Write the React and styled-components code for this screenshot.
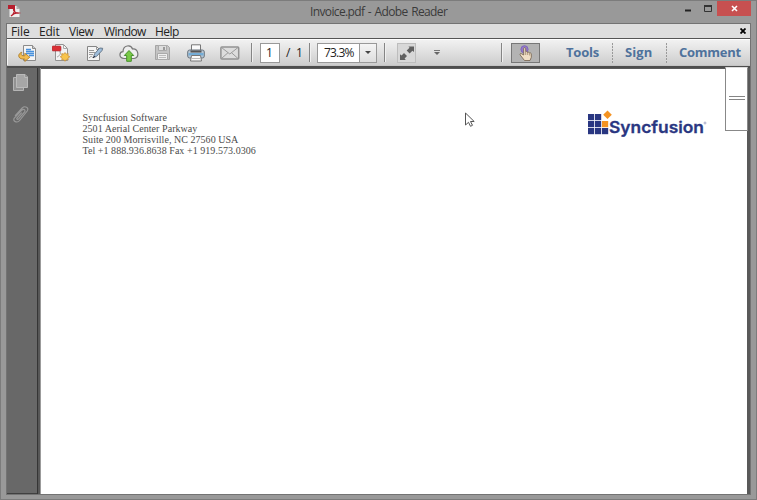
import React from "react";
import styled, { createGlobalStyle } from "styled-components";

const Global = createGlobalStyle`
  * { box-sizing: border-box; }
  body { margin: 0; overflow: hidden; }
`;
const Window = styled.div`
  width: 757px; height: 500px; padding: 0 5px 5px; background: #999;
  border: 1px solid #7c7c7c; display: flex; flex-direction: column;
  font-family: "Open Sans", "Noto Sans", sans-serif; color: #222;
`;
const TitleBar = styled.header`
  height: 22px; display: grid; grid-template-columns: 304px 160px 1fr; flex: none;
`;
const AppIcon = styled.div`padding: 3px 0 0 1px; line-height: 0;`;
const Title = styled.div`
  font-size: 12px; line-height: 22px; white-space: nowrap; color: #3b3b3b;
  letter-spacing: ${(p) => p.$track}px; word-spacing: 1px;
`;
const Controls = styled.div`display: flex; justify-content: flex-end;`;
const CloseButton = styled.div`
  width: 34px; height: 15px; background: #c75050; display: flex; justify-content: center; align-items: center;
`;
const Frame = styled.main`
  width: 745px; height: 472px; border: 1px solid #737373; display: flex; flex-direction: column;
  background: #595959; flex: none;
`;
const MenuBar = styled.nav`
  height: 14px; background: #dedede; display: flex; flex: none; padding-left: 4px;
`;
const MenuItem = styled.span`
  width: ${(p) => p.$w}px; font-size: 12px; line-height: 15px; letter-spacing: ${(p) => p.$track}px;
  white-space: nowrap; flex: none;
`;
const CloseDocument = styled.div`margin-left: auto; padding: 4px 4px 0 0; line-height: 0;`;
const Toolbar = styled.div`
  height: 28px; flex: none; display: flex; align-items: center; padding-top: 1px;
  border-top: 1px solid #555; border-bottom: 1px solid #c4c4c4;
  background: linear-gradient(#f3f3f3, #e2e2e2 45%, #cdcdcd); box-shadow: inset 0 1px #fff, inset 1px 0 #f5f5f5;
`;
const IconSlot = styled.div`
  width: ${(p) => p.$w}px; padding-left: ${(p) => p.$pad || 0}px; flex: none; display: flex; align-items: center;
`;
const Separator = styled.div`
  width: 1px; height: 19px; margin-right: ${(p) => p.$after}px; flex: none; background: #858585;
  box-shadow: 1px 0 #f0f0f0;
`;
const Field = styled.div`
  width: ${(p) => p.$w}px; height: 20px; margin-right: ${(p) => p.$after || 0}px; border: 1px solid #999;
  background: #fff; flex: none; display: flex; align-items: center; font-size: 12px; line-height: 18px;
  letter-spacing: ${(p) => p.$track || 0}px;
`;
const PageNumber = styled.span`flex: 1; text-align: center; padding-right: 1px;`;
const PageCount = styled.span`
  width: 29px; padding-left: 6px; font-size: 12px; white-space: pre; flex: none; line-height: 18px;
  letter-spacing: -0.2px;
`;
const ZoomValue = styled.span`width: 42px; padding-left: 6px;`;
const Arrow = styled.span`
  height: 18px; width: 17px; border-left: 1px solid #999; background: linear-gradient(#f5f5f5, #ddd);
  display: flex; align-items: center; justify-content: center;
`;
const Tool = styled.div`
  width: ${(p) => p.$w}px; height: 20px; border: 1px solid ${(p) => (p.$active ? "#777" : "#bdbdbd")};
  background: ${(p) => (p.$active ? "#b3b3b3" : "#d8d8d8")}; margin-right: ${(p) => p.$after}px; flex: none;
  display: flex; align-items: center; justify-content: center;
`;
const PanelLink = styled.div`
  width: ${(p) => p.$w}px; color: #4f729c; font-size: 13px; font-weight: 700; white-space: nowrap;
  line-height: 19px; letter-spacing: ${(p) => p.$track}px; flex: none;
`;
const Dots = styled.div`
  width: 1px; height: 20px; flex: none; margin-right: 12px;
  background: repeating-linear-gradient(#999 0 2px, #ddd 2px 3px);
`;
const Workspace = styled.div`
  flex: 1; display: flex; min-height: 0; border-top: 2px solid #4d4d4d; position: relative;
`;
const Sidebar = styled.aside`
  width: 30px; background: #686868; border-bottom: 1px solid #404040; padding: 5px 0 0 5px;
  display: flex; flex-direction: column; gap: 13px; line-height: 0;
`;
const Gutter = styled.div`
  width: 4px; border-left: 1px solid #353535; border-right: 1px solid #9b9b9b; background: #575757;
`;
const Page = styled.article`
  width: 706px; margin-top: 1px; background: #fff; display: flex; justify-content: space-between;
  padding: 43px 40px 0 41.5px; position: relative;
`;
const Address = styled.address`
  font: normal 10px/11.1px "Liberation Serif", serif; color: #4b4b4b; white-space: nowrap;
`;
const AddressLine = styled.div`letter-spacing: ${(p) => p.$track}px;`;
const Logo = styled.div`line-height: 0; margin-top: -2px;`;
const ScrollThumb = styled.div`
  position: absolute; left: 718px; top: -1px; width: 23px; height: 64px; background: #fff;
  border: 1px solid #888; border-top-color: #ddd; display: flex; align-items: center; justify-content: center;
`;
const Grip = styled.div`width: 16px; height: 4px; border: solid #858585; border-width: 1px 0; margin-top: -2px;`;
const Pointer = styled.div`position: absolute; left: 423px; top: 43px; line-height: 0;`;

const ConvertIcon = () => (
  <svg width="19" height="18" viewBox="0 0 19 18">
    <path d="M5.5 1.5h9l3 3v12h-12z" fill="#f5f5f5" stroke="#8b8b8b" />
    <path d="M14.5 1.5v3h3" fill="#ccc" stroke="#8b8b8b" />
    <path d="M8 5.5h5M8 7.5h8M8 9.5h8M11 11.5h5" stroke="#4791dd" strokeWidth="1.5" />
    <path d="M3.8 8.2c-4.2 1.3-4.3 6.5 1 6.8h2v2.5l5-4.3-5-4v2.6H5.2c-2 0-2.6-1.6-1.4-3.6z" fill="#f3bd50" stroke="#a77722" strokeWidth=".8" />
  </svg>
);
const CreateIcon = () => (
  <svg width="19" height="18" viewBox="0 0 19 18">
    <path d="M3.5.5h8l4 4v12h-12z" fill="#f3f3f3" stroke="#929292" />
    <path d="M11.5.5v4h4M5 13c3-1 4-4 3-6 0 4 2 4 5 5" fill="none" stroke="#aaa" />
    <rect y="2" width="9" height="5" rx="1" fill="#da3036" stroke="#aa3035" strokeWidth=".6" />
    <path d="m13 8.5 1.2 1.6 2-.5-.3 2 1.9 1.2-1.9 1.2.3 2-2-.4L13 17.3l-1.2-1.7-2 .4.3-2-1.9-1.2 1.9-1.2-.3-2 2 .5z" fill="#f8c44c" stroke="#c68e35" strokeWidth=".7" />
  </svg>
);
const SignIcon = () => (
  <svg width="18" height="18" viewBox="0 0 18 18">
    <path d="M1.5 2.5h9l3 3v11h-12z" fill="#f4f4f4" stroke="#858585" />
    <path d="M10.5 2.5v3h3M3 6.5h5M3 8.5h6M3 10.5h4M3 14c4-4 2 1 5-1" fill="none" stroke="#999" />
    <path d="m7.3 13.7 1.2-3.8L13.7 4l3 .3-.7 2.3-5.5 5.8z" fill="#9ebddb" stroke="#5c6e80" strokeWidth=".9" />
    <path d="m7 14 2-2" stroke="#334" />
  </svg>
);
const CloudIcon = () => (
  <svg width="20" height="18" viewBox="0 0 20 18">
    <path d="M5 14.5C-.5 14 0 8 4 7.7 4 1 12 0 13.5 5c6-.5 7.5 8.5 1.5 9.5z" fill="#eee" stroke="#777" strokeWidth="1.2" />
    <path d="m10 6.5 4.7 5h-2.4v5.8H7.7v-5.8H5.3z" fill="#79c947" stroke="#46912b" />
  </svg>
);
const SaveIcon = () => (
  <svg width="17" height="17" viewBox="0 0 17 17">
    <path d="M1.5 1.5h12l2 2v12h-14z" fill="#c4c4c4" stroke="#a5a5a5" />
    <path d="M4.5 1.5h8v5h-8z" fill="#dedede" stroke="#aaa" />
    <path d="M10 3v3" stroke="#999" strokeWidth="2" />
    <path d="M3.5 9.5h10v6h-10z" fill="#eee" stroke="#aaa" />
    <path d="M5 11.5h7M5 13.5h7" stroke="#bbb" />
  </svg>
);
const PrintIcon = () => (
  <svg width="18" height="18" viewBox="0 0 18 18">
    <path d="M4.5 7V.8h9V7" fill="#fafafa" stroke="#777" />
    <rect x=".7" y="6" width="16.6" height="8" rx="2" fill="#b7c6d3" stroke="#68737d" />
    <path d="M1.5 9h15v2.5h-15z" fill="#74add7" />
    <path d="M3.5 6.5h11v2h-11z" fill="#555" />
    <path d="m4.5 11.5-1 5.5h11l-1-5.5z" fill="#fafafa" stroke="#777" />
    <path d="M5 14.5h8" stroke="#bbb" />
  </svg>
);
const MailIcon = () => (
  <svg width="20" height="14" viewBox="0 0 20 14">
    <rect x=".9" y=".9" width="17.8" height="12" rx="1" fill="#ddd" stroke="#929292" strokeWidth="1.5" />
    <path d="m1.5 1.5 8.3 6.5L18 1.5M1.5 12.5 8 6.7m10 5.8-6.5-5.8" fill="none" stroke="#9b9b9b" />
  </svg>
);
const FitIcon = () => (
  <svg width="16" height="16" viewBox="0 0 16 16">
    <path d="M9.5 1.5H15V7l-1.6-1.3-2.8 2.8-2.9-2.9 2.8-2.8zM1 9.3l1.6 1.2L5 8.1l3 3-2.4 2.4L6.8 15H1z" fill="#606060" />
  </svg>
);
const HandIcon = () => (
  <svg width="16" height="18" viewBox="0 0 16 18">
    <circle cx="6.5" cy="5.3" r="3.6" fill="#9479cb" stroke="#8067bd" />
    <path d="M5.7 11V4.7c0-1.5 2-1.5 2 0v3c1-.7 1.8 0 1.8.7 1-.6 1.8 0 1.8.7 1-.5 2 0 2 1v3.2L12 16.5H6.5L2.2 11c-.8-1.4.8-2 1.7-1z" fill="#f0dfc6" stroke="#725f4b" strokeWidth=".8" />
    <path d="M7.7 8v3m2-2.5V11m2-1.5v2" stroke="#8f785f" strokeWidth=".7" />
  </svg>
);
const PagesIcon = () => (
  <svg width="18" height="19" viewBox="0 0 18 19">
    <path d="M1.5 4.5h10v13h-10z" fill="#929292" stroke="#b5b5b5" />
    <path d="M4.5 1.5h8.5l2.5 2.5v10.5h-11z" fill="#a6a6a6" stroke="#bababa" />
    <path d="M12.8 1.5v2.8h2.7" fill="#777" stroke="#c5c5c5" />
  </svg>
);
const ClipIcon = () => (
  <svg width="18" height="19" viewBox="0 0 18 19">
    <path d="M3 10.8 10.2 3c2.7-2.7 7.3-.3 5 3L7.6 15.5c-2.3 3-7.5.8-5.3-2.3l7.5-8c2-1.7 4.3 0 2.6 2l-5.6 6.5c-1.3 1.2-2.7.3-1.7-.9l4.6-5.1" fill="none" stroke="#999" strokeWidth="1.2" />
  </svg>
);
const ReaderIcon = () => (
  <svg width="15" height="15" viewBox="0 0 15 15">
    <path d="M2.5 2h7l3 3v8h-10z" fill="#eee" />
    <path d="M9.5 2v3h3z" fill="#aaa" />
    <path d="M1 1h7v4H1z" fill="#b61f2e" />
    <path d="M4 12c4-3 4-7 3-7-2 1 2 5 5 4-4-1-6 1-8 3z" fill="none" stroke="#b61f2e" strokeWidth="1.2" />
  </svg>
);
const squares = [[0, 0], [7, 0], [0, 7], [7, 7], [0, 14], [7, 14], [14, 14]];
const BrandLogo = () => (
  <svg width="119" height="31" viewBox="0 0 119 31">
    {squares.map(([x, y]) => <rect key={`${x}-${y}`} x={x} y={y + 4} width="6.2" height="6.2" fill="#293681" />)}
    <rect x="14" y="11" width="6.2" height="6.2" fill="#f49322" />
    <path d="m19.5.5 4.3 4.3-4.3 4.3-4.3-4.3z" fill="#f49322" />
    <text x="21" y="23" textLength="95" lengthAdjust="spacingAndGlyphs" fontFamily="Inter, sans-serif" fontSize="16.5" fontWeight="600" fill="#293681" stroke="#293681" strokeWidth=".3">Syncfusion</text>
    <circle cx="117" cy="13" r="1" fill="none" stroke="#7c82ad" strokeWidth=".6" />
  </svg>
);

const menus = [["File", 28, -0.1], ["Edit", 30, -0.2], ["View", 35, -0.45], ["Window", 51, -0.6], ["Help", 31, -0.5]];
const address = [["Syncfusion Software", 0.04], ["2501 Aerial Center Parkway", 0.05], ["Suite 200 Morrisville, NC 27560 USA", 0.04], ["Tel +1 888.936.8638 Fax +1 919.573.0306", 0.05]];

export default function App() {
  return (
    <>
      <Global />
      <Window>
        <TitleBar>
          <AppIcon><ReaderIcon /></AppIcon>
          <Title $track={-0.63}>Invoice.pdf - Adobe Reader</Title>
          <Controls>
            <svg width="34" height="20" viewBox="0 0 34 20">
              <path d="M2 9.5h6" stroke="#222" strokeWidth="2" />
              <path d="M21.5 4.5h7v6h-7z" fill="none" stroke="#333" />
              <path d="M21 5h8" stroke="#333" strokeWidth="2" />
            </svg>
            <CloseButton><svg width="7" height="7" viewBox="0 0 7 7"><path d="m1 1 5 5m0-5L1 6" stroke="#fff" strokeWidth="1.6" /></svg></CloseButton>
          </Controls>
        </TitleBar>
        <Frame>
          <MenuBar>
            {menus.map(([label, width, track]) => <MenuItem key={label} $w={width} $track={track}>{label}</MenuItem>)}
            <CloseDocument><svg width="6" height="6" viewBox="0 0 6 6"><path d="m.5.5 5 5m0-5-5 5" stroke="#000" strokeWidth="1.8" /></svg></CloseDocument>
          </MenuBar>
          <Toolbar>
            <IconSlot $w={45} $pad={11}><ConvertIcon /></IconSlot>
            <IconSlot $w={34}><CreateIcon /></IconSlot>
            <IconSlot $w={33}><SignIcon /></IconSlot>
            <IconSlot $w={35}><CloudIcon /></IconSlot>
            <IconSlot $w={33}><SaveIcon /></IconSlot>
            <IconSlot $w={33}><PrintIcon /></IconSlot>
            <IconSlot $w={31}><MailIcon /></IconSlot>
            <Separator $after={8} />
            <Field $w={20}><PageNumber>1</PageNumber></Field>
            <PageCount>{"/  1"}</PageCount>
            <Separator $after={7} />
            <Field $w={60} $after={7} $track={-0.8}>
              <ZoomValue>73.3%</ZoomValue>
              <Arrow><svg width="6" height="4" viewBox="0 0 6 4"><path d="M0 0h6L3 3z" fill="#444" /></svg></Arrow>
            </Field>
            <Separator $after={12} />
            <Tool $w={19} $after={18}><FitIcon /></Tool>
            <IconSlot $w={67}><svg width="6" height="6" viewBox="0 0 6 6"><path d="M0 .5h6" stroke="#777" /><path d="M0 2h6L3 5z" fill="#666" /></svg></IconSlot>
            <Separator $after={9} />
            <Tool $active $w={29} $after={26}><HandIcon /></Tool>
            <PanelLink $w={46} $track={-0.2}>Tools</PanelLink>
            <Dots />
            <PanelLink $w={41} $track={0.1}>Sign</PanelLink>
            <Dots />
            <PanelLink $w={66} $track={-0.25}>Comment</PanelLink>
          </Toolbar>
          <Workspace>
            <Sidebar><PagesIcon /><ClipIcon /></Sidebar>
            <Gutter />
            <Page>
              <Address>{address.map(([line, track]) => <AddressLine key={line} $track={track}>{line}</AddressLine>)}</Address>
              <Logo><BrandLogo /></Logo>
              <Pointer><svg width="12" height="16" viewBox="0 0 12 16"><path d="M1.5 1v12l3-2.7 2 4 2-1-2-3.8h3.7z" fill="#fff" stroke="#555" /></svg></Pointer>
            </Page>
            <ScrollThumb><Grip /></ScrollThumb>
          </Workspace>
        </Frame>
      </Window>
    </>
  );
}
